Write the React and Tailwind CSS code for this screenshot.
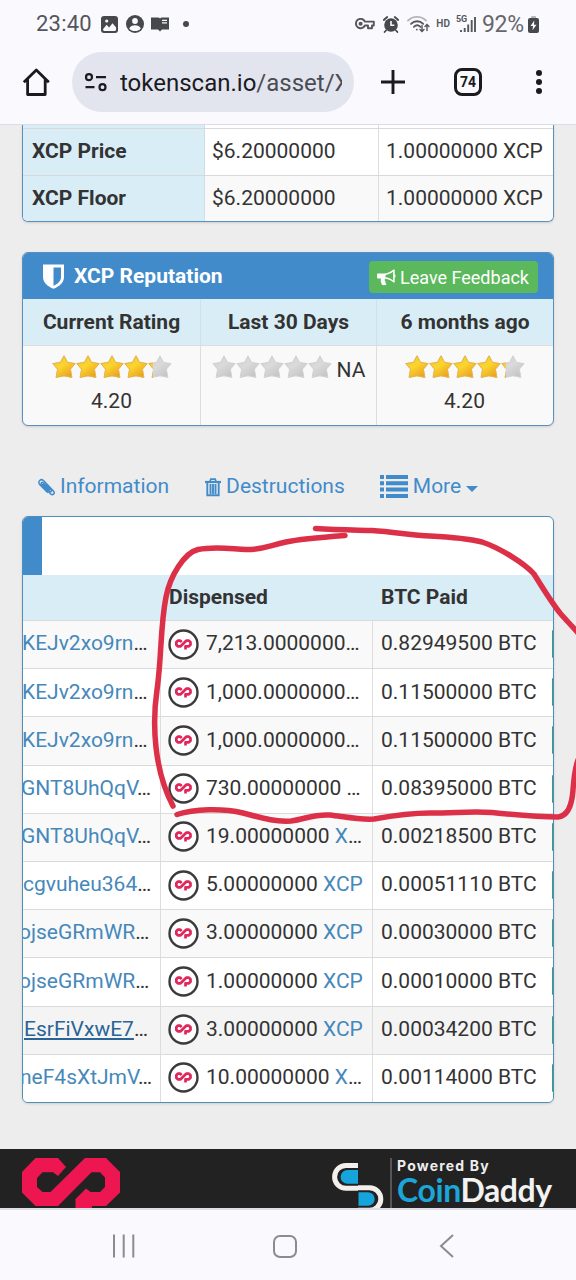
import clsx from "clsx";

const prices = [
  { label: "XCP Price", usd: "$6.20000000", xcp: "1.00000000 XCP" },
  { label: "XCP Floor", usd: "$6.20000000", xcp: "1.00000000 XCP" },
];

const dispenses = [
  { address: "KEJv2xo9rn", shift: "-ml-px", amount: "7,213.0000000", unit: "", paid: "0.82949500 BTC" },
  { address: "KEJv2xo9rn", shift: "-ml-px", amount: "1,000.0000000", unit: "", paid: "0.11500000 BTC" },
  { address: "KEJv2xo9rn", shift: "-ml-px", amount: "1,000.0000000", unit: "", paid: "0.11500000 BTC" },
  { address: "GNT8UhQqV", shift: "-ml-[2px]", amount: "730.00000000 ", unit: "", paid: "0.08395000 BTC" },
  { address: "GNT8UhQqV", shift: "-ml-[2px]", amount: "19.00000000 ", unit: "X", paid: "0.00218500 BTC" },
  { address: "cgvuheu364", shift: "ml-0", amount: "5.00000000 ", unit: "XCP", paid: "0.00051110 BTC" },
  { address: "ojseGRmWR", shift: "-ml-[4px]", amount: "3.00000000 ", unit: "XCP", paid: "0.00030000 BTC" },
  { address: "ojseGRmWR", shift: "-ml-[4px]", amount: "1.00000000 ", unit: "XCP", paid: "0.00010000 BTC" },
  { address: "EsrFiVxwE7", shift: "ml-px", amount: "3.00000000 ", unit: "XCP", paid: "0.00034200 BTC", active: true },
  { address: "neF4sXtJmV", shift: "-ml-[3px]", amount: "10.00000000 ", unit: "X", paid: "0.00114000 BTC" },
];

const STAR = "M12 .8l3.6 6.600 7.600 1.200-4.800 5.600 1.500 8.200-7.900-1.600-7.900 1.600 1.500-8.200L.8 8.600l7.600-1.200z";

function Stars({ rating = 0 }) {
  const filled = (rating / 5) * 120;
  return (
    <svg width="120" height="24" viewBox="0 0 120 24" className="shrink-0">
      <defs>
        <linearGradient id="gold" x1="0" y1="0" x2="0.7" y2="1">
          <stop offset="0" stopColor="#f0c040" />
          <stop offset="0.5" stopColor="#fbd62e" />
          <stop offset="1" stopColor="#ec9f22" />
        </linearGradient>
        <linearGradient id="silver" x1="0" y1="0" x2="0.7" y2="1">
          <stop offset="0" stopColor="#cdcdcd" />
          <stop offset="0.5" stopColor="#dadada" />
          <stop offset="1" stopColor="#c4c4c4" />
        </linearGradient>
        <clipPath id={`fill-${rating * 100}`}>
          <rect width={filled} height="24" />
        </clipPath>
      </defs>
      {[0, 1, 2, 3, 4].map((i) => (
        <path key={i} d={STAR} transform={`translate(${i * 24} 0)`} fill="url(#silver)" stroke="#d2d2d2" strokeWidth="1" strokeLinejoin="round" />
      ))}
      <g clipPath={`url(#fill-${rating * 100})`}>
        {[0, 1, 2, 3, 4].map((i) => (
          <path key={i} d={STAR} transform={`translate(${i * 24} 0)`} fill="url(#gold)" stroke="#e8b440" strokeWidth="1" strokeLinejoin="round" />
        ))}
      </g>
    </svg>
  );
}

function TokenIcon() {
  return (
    <svg width="31" height="31" viewBox="0 0 31 31" className="shrink-0">
      <circle cx="15.500" cy="15.500" r="14" fill="#fff" stroke="#3a3a3c" strokeWidth="2.400" />
      <path
        d="M13.700 13L12.300 11.700H9.800L8.300 13.200V15.800L9.800 17.300H12.600L18.200 11.700H20.900L22.500 13.200V15.800L20.900 17.300H17.500V20.500"
        fill="none"
        stroke="#e0265a"
        strokeWidth="2.700"
        strokeLinejoin="round"
      />
    </svg>
  );
}

function StatusBar() {
  return (
    <div className="flex h-12 items-center pl-[36px] pr-[37px] text-[#55565b]">
      <span className="text-[22px] leading-none tracking-[0.2px]">23:40</span>
      <svg className="ml-[9px]" width="17" height="17" viewBox="0 0 17 17">
        <rect width="17" height="17" rx="3" fill="#47484c" />
        <path d="M2 13.200l3.600-4.400 2.500 2.600 3.400-4.200 3.600 4.200v2.200a1.400 1.400 0 01-1.400 1.400H3.400A1.400 1.400 0 012 13.600z" fill="#f9f9fe" />
        <circle cx="5.700" cy="5" r="1.600" fill="#f9f9fe" />
      </svg>
      <svg className="ml-2" width="18" height="18" viewBox="0 0 18 18">
        <circle cx="9" cy="9" r="9" fill="#47484c" />
        <circle cx="9" cy="6" r="2.900" fill="#f9f9fe" />
        <path d="M3.200 13.400c1-2.400 3.200-3.200 5.800-3.200s4.800.8 5.800 3.200c-1.500 1.800-3.500 2.600-5.800 2.600s-4.300-.8-5.800-2.600z" fill="#f9f9fe" />
      </svg>
      <svg className="ml-[7px]" width="18" height="16" viewBox="0 0 18 16">
        <path d="M0 1.500h6.500c1.200 0 2 .4 2.500 1 .5-.6 1.300-1 2.500-1H18V13.500h-7L9 15.500l-2-2H0z" fill="#47484c" />
        <path d="M11 4.300h5M11 6.800h5" stroke="#f9f9fe" strokeWidth="1.200" />
      </svg>
      <span className="ml-[14px] size-1.5 rounded-full bg-[#47484c]" />

      <div className="ml-auto flex items-center">
        <svg width="20" height="12" viewBox="0 0 20 12" fill="none" stroke="#55565b" strokeWidth="1.900">
          <path d="M9.900 3.600H18.800V7.500H17V10.300H13V7.500H9.900A4.700 4.700 0 119.900 3.600z" strokeLinejoin="round" />
          <circle cx="5.600" cy="5.700" r="1.100" />
        </svg>
        <svg className="ml-2" width="16" height="17" viewBox="0 0 16 17">
          <circle cx="8" cy="9" r="6.800" fill="#47484c" />
          <path d="M.8 4L4.200 1M15.200 4L11.800 1M3 14.500L1.600 16M13 14.500L14.400 16" stroke="#47484c" strokeWidth="1.800" strokeLinecap="round" />
          <path d="M8 5v4.300h3.300" fill="none" stroke="#f9f9fe" strokeWidth="1.600" />
        </svg>
        <svg className="ml-2" width="23" height="18" viewBox="0 0 23 18" fill="none" strokeWidth="1.800" strokeLinecap="round">
          <path d="M1 5.500C6 .6 14 .6 19 5.500" stroke="#b5b6ba" />
          <path d="M4 8.800c3.500-3.400 8.800-3.400 12.200 0M6.900 11.800c2-1.900 4.600-1.900 6.500 0" stroke="#55565b" />
          <circle cx="9.800" cy="14.600" r="0.900" fill="#55565b" stroke="none" />
          <path d="M15 10.500v5.800m-2-1.800l2 2 2-2M20 15.500v-5.800m-2 1.800l2-2 2 2" stroke="#55565b" strokeWidth="1.400" />
        </svg>
        <span className="ml-[6px] text-[10px] font-semibold leading-none">HD</span>
        <div className="ml-[6px] flex h-[18px] w-[20px] items-start">
          <span className="text-[9px] font-bold leading-none">5G</span>
          <svg className="-ml-[7px] shrink-0" width="16" height="18" viewBox="0 0 16 18" stroke="#55565b" strokeWidth="1.900">
            <path d="M1 15v2M4.700 13v4M8.200 9.500V17M11.700 5V17M15 2V17" />
          </svg>
        </div>
        <span className="ml-[6px] text-[23px] leading-none tracking-[-0.2px] text-[#66676c]">92%</span>
        <svg className="ml-[4px]" width="11" height="17" viewBox="0 0 11 17">
          <rect x="3" y="0" width="5" height="3" rx="1" fill="#b5b6ba" />
          <rect y="2" width="11" height="15" rx="2" fill="#47484c" />
          <path d="M6.300 4.500L2.500 10H5l-.5 4.200L8.500 8.800H6z" fill="#f9f9fe" />
        </svg>
      </div>
    </div>
  );
}

function Toolbar() {
  return (
    <div className="flex h-[77px] items-start border-b border-[#dcdce6] pl-[22px] pt-1">
      <svg className="mt-[15px]" width="28" height="30" viewBox="0 0 28 30" fill="none" stroke="#1b1b1f" strokeWidth="2.800">
        <path d="M1.800 15.300L14.300 3 26.800 15.300M5.600 12.500V27.500H23.200V12.500" strokeLinejoin="round" />
      </svg>
      <div className="ml-[22px] flex h-[60px] w-[282px] items-center rounded-full bg-[#e2e5ee] pl-3">
        <svg width="24" height="20" viewBox="0 0 24 20" fill="none" stroke="#1b1b1f" strokeWidth="2.200">
          <circle cx="5" cy="5.200" r="3" />
          <path d="M12 5.200h10M1.500 15.200h9" />
          <circle cx="18.500" cy="15.200" r="3" />
        </svg>
        <div className="ml-3 mt-[2px] w-[222px] overflow-hidden whitespace-nowrap text-[24px] text-[#1b1b1f]">
          tokenscan.io<span className="text-[#4a4c54]">/asset/X</span>
        </div>
      </div>
      <svg className="ml-[26px] mt-[17px]" width="26" height="26" viewBox="0 0 26 26" stroke="#1b1b1f" strokeWidth="2.900">
        <path d="M13 1v24M1 13h24" />
      </svg>
      <div className="ml-[48px] mt-4 flex size-[28px] items-center justify-center rounded-[8px] border-3 border-[#1b1b1f] text-[14px] font-bold text-[#1b1b1f]">
        74
      </div>
      <div className="ml-[54px] mt-[18px] flex flex-col gap-[3px]">
        <span className="size-[6px] rounded-full bg-[#1b1b1f]" />
        <span className="size-[6px] rounded-full bg-[#1b1b1f]" />
        <span className="size-[6px] rounded-full bg-[#1b1b1f]" />
      </div>
    </div>
  );
}

function PricePanel() {
  return (
    <div className="mx-[22px] overflow-hidden rounded-b-md border border-t-0 border-[#5b8fbc] bg-white shadow-sm">
      <div className="grid h-[3px] grid-cols-[182px_174px_1fr]">
        <div className="border-r border-[#ccdfe8] bg-[#d9edf7]" />
        <div className="border-r border-[#ddd]" />
      </div>
      {prices.map((row, i) => (
        <div key={row.label} className={clsx("grid h-[46.500px] grid-cols-[182px_174px_1fr] items-stretch border-t border-[#d6dadd]", i % 2 ? "bg-[#f9f9f9]" : "bg-white")}>
          <div className="flex items-center border-r border-[#ccdfe8] bg-[#d9edf7] pl-[9px] font-bold">{row.label}</div>
          <div className="flex items-center border-r border-[#ddd] pl-[7px]">{row.usd}</div>
          <div className="flex items-center whitespace-nowrap pl-[7px]">{row.xcp}</div>
        </div>
      ))}
    </div>
  );
}

function ReputationPanel() {
  return (
    <div className="mx-[22px] mt-[30px] overflow-hidden rounded-md border border-[#5b8fbc] bg-[#f9f9f9] shadow-sm">
      <div className="flex h-[46px] items-center bg-[#428bca] pl-5 pr-[15px] text-white">
        <svg width="21" height="25" viewBox="0 0 21 25">
          <path d="M0 .5h21V13c0 6-5 9.500-10.500 11.800C5 22.500 0 19 0 13z" fill="#fff" />
          <path d="M10.500 3.500h7.500V13c0 4-3 6.700-7.500 8.800z" fill="#428bca" />
        </svg>
        <span className="ml-[10px] mt-px font-bold">XCP Reputation</span>
        <div className="ml-auto mt-[2px] flex h-8 w-[169px] items-center rounded bg-[#5cb85c] pl-2 text-[18px]">
          <svg width="19" height="17" viewBox="0 0 19 17">
            <path d="M0 5.800C0 5 .6 4.500 1.300 4.500H7C10.500 4.500 14 2.800 16.500.5h1.200v5c1.200.3 1.200 2.600 0 3v5h-1.200C14.200 11.400 11.500 10 8.300 9.700c-1 1-.6 2 .3 2.900-.6.9 0 1.900.9 2.600-1 1.200-3.800 1.200-4.700.2-.6-1.900-1.600-3.600-.8-5.800H1.300C.6 9.600 0 9.100 0 8.400z" fill="#fff" />
            <path d="M8.500 5.900c2.700-.3 5.200-1.400 7.600-3.100v8.600c-2.300-1.700-4.900-2.800-7.600-3.100z" fill="#5cb85c" />
          </svg>
          <span className="ml-1 whitespace-nowrap">Leave Feedback</span>
        </div>
      </div>
      <div className="grid h-[46px] grid-cols-[178px_176px_1fr] bg-[#d9edf7] text-center font-bold leading-[47px]">
        <div className="border-r border-[#cfe1ea]">Current Rating</div>
        <div className="border-r border-[#cfe1ea]">Last 30 Days</div>
        <div>6 months ago</div>
      </div>
      <div className="grid h-20 grid-cols-[178px_176px_1fr] border-t border-[#ddd]">
        <div className="flex flex-col items-center border-r border-[#ddd] pt-[9px]">
          <Stars rating={4.2} />
          <span className="mt-[6px] leading-8">4.20</span>
        </div>
        <div className="flex justify-center border-r border-[#ddd] pt-[9px]">
          <Stars />
          <span className="ml-[5px] mt-[3px] leading-6">NA</span>
        </div>
        <div className="flex flex-col items-center pt-[9px] pr-px">
          <Stars rating={4.2} />
          <span className="mt-[6px] leading-8">4.20</span>
        </div>
      </div>
    </div>
  );
}

function Tabs() {
  return (
    <div className="mt-[43px] flex h-9 items-center pl-[38px] text-[#428bca]">
      <svg width="17" height="18" viewBox="0 0 17 18" fill="none" stroke="#428bca" strokeWidth="1.500" strokeLinecap="round">
        <path d="M11.500 11.300L5.300 4.800C4 3.500 2.300 5.200 3.600 6.500L12.400 15.700C14.900 18 17.500 15.200 15.400 12.900L6 3C3-.2-1 3.600 1.900 6.700L9.300 14.300M4.800 6.200L11.500 13.300C12.800 14.500 14.200 13.200 13 11.900L8 6.600" />
      </svg>
      <span className="ml-[5px]">Information</span>
      <svg className="ml-9" width="16" height="19" viewBox="0 0 16 19" fill="none" stroke="#428bca">
        <path d="M0 4h16" strokeWidth="2.200" />
        <path d="M5 3.500l.8-2.300h4.400l.8 2.300" strokeWidth="1.700" />
        <path d="M2.300 4V17.300H13.700V4M5.500 6v10M8 6v10M10.500 6v10" strokeWidth="1.900" />
      </svg>
      <span className="ml-[5px]">Destructions</span>
      <svg className="-mt-px ml-[35px]" width="28" height="23" viewBox="0 0 28 23" fill="#428bca">
        <path d="M0 0h4v4H0zM6 0h22v4H6zM0 6.300h4v4H0zM6 6.300h22v4H6zM0 12.600h4v4H0zM6 12.600h22v4H6zM0 18.900h4v4H0zM6 18.900h22v4H6z" />
      </svg>
      <span className="ml-[5px]">More</span>
      <svg className="ml-[5px] mt-1" width="12" height="6" viewBox="0 0 12 6" fill="#428bca">
        <path d="M0 0h12L6 6z" />
      </svg>
    </div>
  );
}

function DispensesPanel() {
  return (
    <div className="mx-[22px] mt-[11px] overflow-hidden rounded-md border border-[#4f8fbe] bg-white shadow-sm">
      <div className="h-[58px] w-[19px] bg-[#428bca]" />
      <div className="grid h-[45px] grid-cols-[138px_212px_1fr] bg-[#d9edf7] font-bold leading-[44px]">
        <div />
        <div className="pl-2">Dispensed</div>
        <div className="pl-2">BTC Paid</div>
      </div>
      {dispenses.map((row, i) => (
        <div
          key={i}
          className={clsx(
            "grid h-[48.200px] grid-cols-[138px_212px_1fr] whitespace-nowrap border-t border-[#d8dbde] pb-px",
            row.active ? "bg-[#f4f4f4]" : i % 2 ? "bg-white" : "bg-[#f9f9f9]"
          )}
        >
          <div className="-mb-px flex items-center overflow-hidden border-r border-[#ddd] pb-px">
            <span className={row.shift}>
              <a className={row.active ? "text-[#2a6496] underline" : "text-[#4688ba]"}>{row.address}</a>…
            </span>
          </div>
          <div className="-mb-px flex items-center border-r border-[#ddd] pb-px pl-[7px]">
            <TokenIcon />
            <span className="ml-[7px] whitespace-pre">
              {row.amount}
              <a className="text-[#4688ba]">{row.unit}</a>
              {row.unit !== "XCP" && "…"}
            </span>
          </div>
          <div className="flex items-center pl-2">
            {row.paid}
            <span className="ml-auto h-[28px] w-[1.500px] rounded-l bg-[#3c9a7d]" />
          </div>
        </div>
      ))}
    </div>
  );
}

function Footer() {
  return (
    <div className="mt-auto flex h-[59px] items-start overflow-hidden bg-[#222] pl-[22px]">
      <svg className="mt-[9px] shrink-0" width="98" height="50" viewBox="0 0 98 50">
        <path
          d="M13.500 0H36L44 9 36 18 31 14.300H20.500L15 20V29L20.500 34H28.500L63 0H84L98 14V34.500L84 48H70V56H53.500V41L64 30.500 68.500 34H78L83 29V19.500L78 14.300H69.500L36 48H13.500L0 34.500V14z"
          fill="#ed1650"
        />
      </svg>
      <svg className="ml-[212px] mt-[14px] shrink-0" width="54" height="50" viewBox="0 0 54 50" fill="none">
        <path d="M26 2.500H14a11.400 11.400 0 000 22.800H26" stroke="#f2efec" strokeWidth="5" />
        <path d="M26 24.700H37.500a11.300 11.300 0 010 22.600H26" stroke="#f2efec" strokeWidth="5" />
        <path d="M26 7H15.500a6.900 6.900 0 000 13.800H26z" fill="#16a4dc" />
        <path d="M26.500 29.300H36a6.700 6.700 0 010 13.400h-9.500z" fill="#16a4dc" />
      </svg>
      <div className="ml-[4px] mt-[9px] h-[50px] w-[2px] bg-[#555]" />
      <div className="ml-[5px] mt-[9px]">
        <div className="font-[Inter,sans-serif] text-[14px] font-bold leading-4 tracking-[1.200px] text-[#eee]">Powered By</div>
        <div className="-mt-[2px] font-[Lato,sans-serif] text-[32px] font-bold leading-9 tracking-[-0.400px] text-[#f2f2f2]">
          <span className="text-[#1ba5d8]">Coin</span>Daddy
        </div>
      </div>
    </div>
  );
}

function NavBar() {
  return (
    <div className="flex h-[72px] items-center border-t-2 border-[#dfdfe8] pl-[112px] pt-[2px]">
      <svg width="24" height="24" viewBox="0 0 24 24" stroke="#8b8b90" strokeWidth="2">
        <path d="M2 .5v23M11.700 .5v23M21.300 .5v23" />
      </svg>
      <div className="ml-[137px] h-[23px] w-6 rounded-[7px] border-2 border-[#8b8b90]" />
      <svg className="ml-[142px]" width="15" height="24" viewBox="0 0 15 24" fill="none" stroke="#8b8b90" strokeWidth="2">
        <path d="M14 1L2 12l12 11" />
      </svg>
    </div>
  );
}

function Marker() {
  return (
    <svg className="pointer-events-none absolute left-0 top-0" width="576" height="1280" viewBox="0 0 576 1280" fill="none" stroke="#dc3048" strokeWidth="5.500" strokeLinecap="round" strokeLinejoin="round">
      <path d="M345 535.500C325 537 300 539 286 542C268 546 262 550 246 549.500C228 548.500 214 546 198 549.500C184 553 170 576 166 597C160 628 162 654 157 690C152 724 154 770 173 806" />
      <path d="M177 814.500C194 809 222 808 243 813C262 818 274 822 291 821C306 819 313 814 330 815C346 817 360 820 374 819C396 815 412 813 430 813C456 813 472 811 492 812.500C516 815 538 817 558 817C568 816 572 804 573 790C574 776 575 768 578 760" />
      <path d="M315.500 528.500C338 530 355 530 372 530.500C394 532 412 535 430 536C450 537 466 538 482 542C500 548 524 563 534 574C542 587 552 603 560 613C566 620 572 626 578 633" />
    </svg>
  );
}

export default function App() {
  return (
    <div className="relative flex h-[1280px] w-[576px] flex-col overflow-hidden bg-[#f9f9fe] font-[Roboto,sans-serif] text-[21px] text-[#333]">
      <StatusBar />
      <Toolbar />
      <div className="flex h-[1083px] flex-col overflow-hidden bg-[#ededed]">
        <PricePanel />
        <ReputationPanel />
        <Tabs />
        <DispensesPanel />
        <Footer />
      </div>
      <NavBar />
      <Marker />
    </div>
  );
}
